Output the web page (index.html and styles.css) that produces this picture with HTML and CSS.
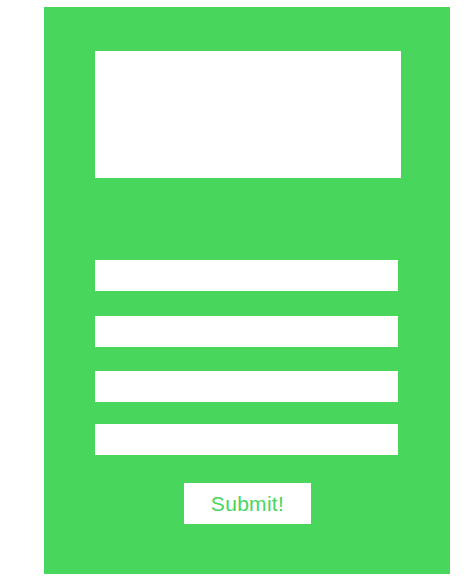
FILE: index.html
```html
<!DOCTYPE html>
<html>
<head>
<meta charset="utf-8">
<link rel="stylesheet" href="styles.css">
</head>
<body>
<form class="card">
  <div class="preview"></div>
  <div class="fields">
    <input class="field" type="text">
    <input class="field" type="text">
    <input class="field" type="text">
    <input class="field" type="text">
  </div>
  <button class="submit" type="button">Submit!</button>
</form>
</body>
</html>
```
FILE: styles.css
```css
html, body {
  margin: 0;
  padding: 0;
  background: #ffffff;
}
.card {
  box-sizing: border-box;
  width: 406px;
  height: 567px;
  margin: 7px 0 0 44px;
  padding: 44px 49px 0 51px;
  background: #48d65d;
  display: flex;
  flex-direction: column;
}
.preview {
  width: 306px;
  height: 127px;
  background: #ffffff;
}
.fields {
  margin-top: 82px;
  display: flex;
  flex-direction: column;
  gap: 24px;
}
.field {
  box-sizing: border-box;
  width: 303px;
  height: 31px;
  border: 0;
  margin: 0;
  padding: 0;
  background: #ffffff;
  outline: none;
}
.field:nth-child(2) { margin-top: 1px; }
.field:nth-child(4) { margin-top: -2px; }
.submit {
  align-self: flex-start;
  margin: 28px 0 0 89px;
  width: 127px;
  height: 41px;
  border: 0;
  padding: 0;
  background: #ffffff;
  color: #48d65d;
  font-family: "Liberation Sans", Arial, sans-serif;
  font-size: 21px;
  letter-spacing: 0.3px;
  cursor: pointer;
}
```
